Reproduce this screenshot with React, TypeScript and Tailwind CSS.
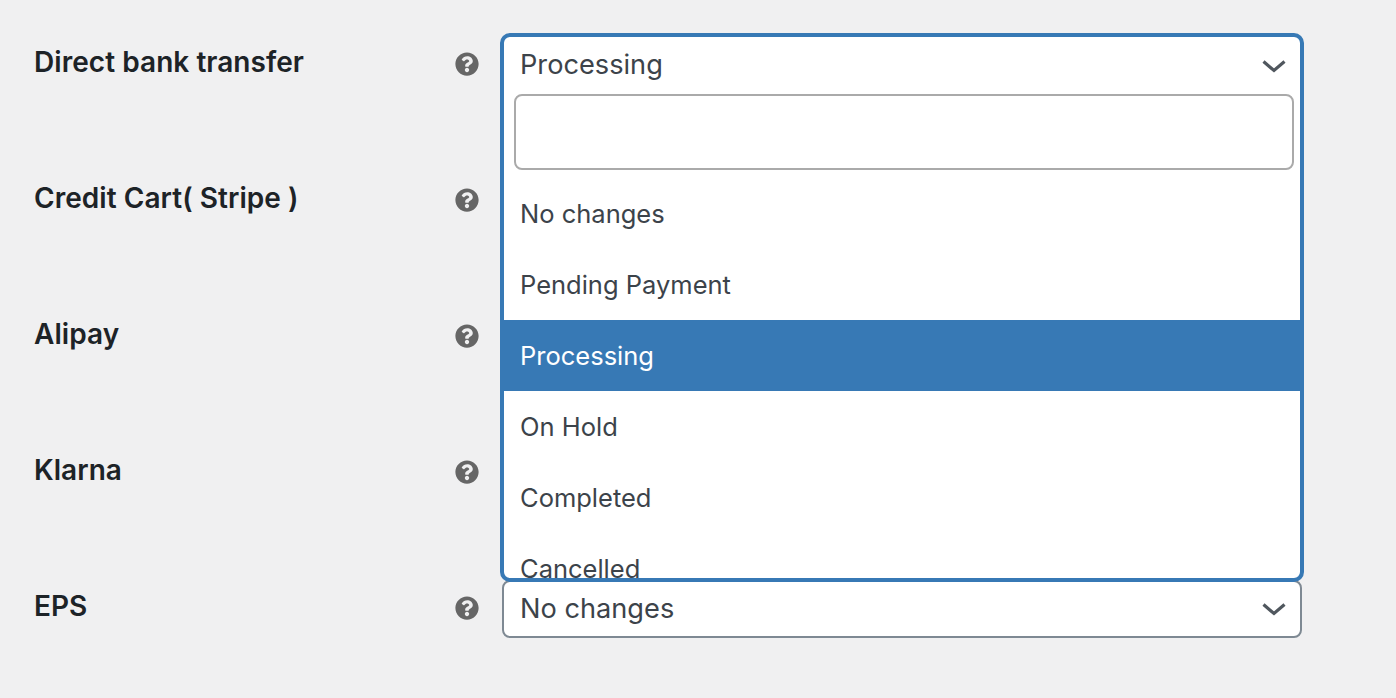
import { FaQuestionCircle } from 'react-icons/fa';

const gateways = ['Direct bank transfer', 'Credit Cart( Stripe )', 'Alipay', 'Klarna', 'EPS'];
const statuses = ['No changes', 'Pending Payment', 'Processing', 'On Hold', 'Completed', 'Cancelled'];

const Chevron = () => (
  <svg width="24" height="14" viewBox="0 0 24 14" fill="none" className="shrink-0">
    <path d="M1.5 2.5 L12 11.5 L22.5 2.5" stroke="#50575e" strokeWidth="3.2" />
  </svg>
);

const App = () => {
  return (
    <div className="w-[1396px] h-[698px] overflow-hidden bg-[#f0f0f1] font-['Inter',sans-serif] pt-[36px] pl-[34px]">
      <div className="relative w-[1268px]">
        {gateways.map((name) => (
          <div key={name} className="flex h-[136px] items-start">
            <div className="w-[421px] text-[28px] leading-[52px] font-semibold tracking-[0.05px] text-[#1d2327]">{name}</div>
            <FaQuestionCircle className="mt-[16px] w-[24px] h-[24px] text-[#666666]" />
            {/* selects of the other rows sit behind the open dropdown */}
            {name === 'EPS' && (
              <div className="ml-[23px] w-[800px] h-[58px] pl-[16px] pr-[14px] flex items-center justify-between bg-white border-2 border-[#7e8993] rounded-[8px] text-[27.2px] text-[#3c434a]">
                <span>No changes</span>
                <Chevron />
              </div>
            )}
          </div>
        ))}

        {/* open select dropdown */}
        <div className="absolute left-[466px] top-[-3px] w-[804px] h-[549px] bg-white border-4 border-[#3779b5] rounded-[10px] overflow-hidden">
          <div className="flex h-[55px] pt-[2px] pl-[16px] pr-[14px] items-center justify-between text-[27.2px] text-[#3c434a]">
            <span>Processing</span>
            <Chevron />
          </div>
          <div className="pl-[10px] pr-[6px] pt-[2px]">
            <div className="h-[76px] bg-white border-2 border-[#aaaaaa] rounded-[8px]" />
          </div>
          <div className="mt-[8px] text-[25.5px] text-[#3c434a]">
            {statuses.map((s) => (
              <div
                key={s}
                className={`h-[71px] pl-[16px] pt-[2px] flex items-center ${s === 'Processing' ? 'bg-[#3779b5] text-white' : ''}`}
              >
                {s}
              </div>
            ))}
          </div>
        </div>
      </div>
    </div>
  );
};

export default App;
